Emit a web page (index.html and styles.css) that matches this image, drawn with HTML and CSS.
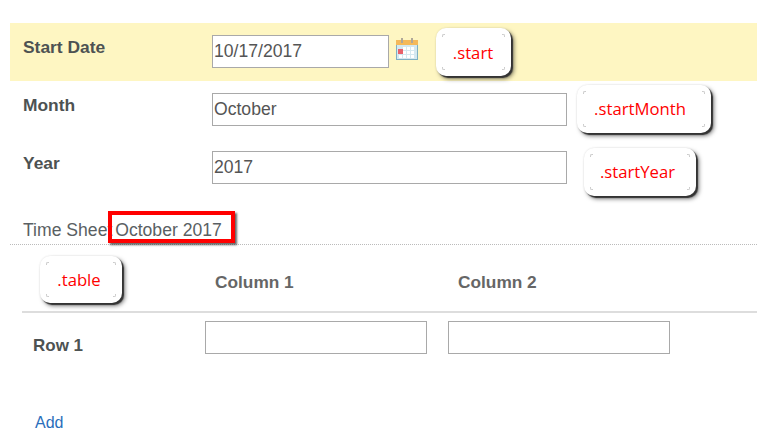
FILE: index.html
```html
<!DOCTYPE html>
<html lang="en">
<head>
<meta charset="utf-8">
<title>Time Sheet</title>
<link rel="stylesheet" href="styles.css">
</head>
<body>
<main class="page">
  <div class="row row-start">
    <label class="label">Start Date</label>
    <input class="input input-date" type="text" value="10/17/2017">
    <svg class="cal" width="22" height="22" viewBox="0 0 22 22" aria-hidden="true">
      <rect x="0.5" y="3.5" width="21" height="18" fill="#d5e8f0" stroke="#7fb0c2"/>
      <rect x="0" y="2" width="22" height="5" fill="#f5b95a"/>
      <rect x="5" y="0" width="2" height="5" fill="#b0a898"/>
      <rect x="15" y="0" width="2" height="5" fill="#b0a898"/>
      <g fill="#fff">
        <rect x="7" y="9" width="3" height="3"/><rect x="11" y="9" width="3" height="3"/><rect x="15" y="9" width="3" height="3"/>
        <rect x="7" y="13" width="3" height="3"/><rect x="11" y="13" width="3" height="3"/><rect x="15" y="13" width="3" height="3"/>
        <rect x="3" y="17" width="3" height="3"/><rect x="7" y="17" width="3" height="3"/><rect x="11" y="17" width="3" height="3"/><rect x="15" y="17" width="3" height="3"/>
      </g>
      <rect x="2" y="11" width="5" height="5" fill="#e8606a"/>
    </svg>
  </div>
  <div class="row">
    <label class="label">Month</label>
    <input class="input input-wide" type="text" value="October">
  </div>
  <div class="row">
    <label class="label">Year</label>
    <input class="input input-wide" type="text" value="2017">
  </div>
  <div class="sheet-title">Time Sheet <span class="sheet-period">October 2017</span></div>
  <div class="table-head">
    <div class="col-head">Column 1</div>
    <div class="col-head">Column 2</div>
  </div>
  <div class="table-row">
    <div class="row-name">Row 1</div>
    <input class="input input-cell" type="text">
    <input class="input input-cell" type="text">
  </div>
  <a class="add" href="#">Add</a>
</main>

<div class="callout c-start"><i class="tl"></i><i class="tr"></i><i class="bl"></i><i class="br"></i>.start</div>
<div class="callout c-month"><i class="tl"></i><i class="tr"></i><i class="bl"></i><i class="br"></i>.startMonth</div>
<div class="callout c-year"><i class="tl"></i><i class="tr"></i><i class="bl"></i><i class="br"></i>.startYear</div>
<div class="callout c-table"><i class="tl"></i><i class="tr"></i><i class="bl"></i><i class="br"></i>.table</div>
<div class="redbox"></div>
</body>
</html>
```
FILE: styles.css
```css
* { box-sizing: border-box; }
html, body { margin: 0; padding: 0; background: #fff; }
body { position: relative; width: 757px; height: 447px; overflow: hidden; font-family: "Liberation Sans", Arial, sans-serif; color: #555; }
.page { padding-top: 23px; padding-left: 10px; }
.row { display: flex; align-items: flex-start; height: 58px; padding-left: 13px; padding-top: 12px; }
.row-start { background: #fef6c2; }
.label { width: 189px; font-size: 17.4px; font-weight: 700; color: #4d5252; line-height: 24px; }
.input { display: block; height: 33px; border: 1px solid #a9a9a9; background: #fff; font: 17.6px "Liberation Sans", Arial, sans-serif; color: #555; padding: 0 1px; margin: 0; outline: 0; }
.input-date { width: 177px; }
.input-wide { width: 355px; }
.cal { margin-left: 7px; margin-top: 3px; }
.sheet-title { margin-left: 13px; margin-top: 1px; height: 46px; padding-top: 22px; font-size: 17.6px; line-height: 21px; color: #5a5f63; white-space: nowrap; }
.sheet-period { margin-left: -2px; }
.table-head { display: flex; height: 69px; border-top: 1px dotted #bbb; padding-left: 205px; padding-top: 25px; position: relative; }
.table-head::after { content: ""; position: absolute; left: 12px; right: 0; bottom: 0; border-bottom: 2px solid #ddd; }
.col-head { width: 243px; font-size: 17.3px; font-weight: 700; color: #666; line-height: 24px; }
.table-row { display: flex; align-items: flex-start; margin-left: 12px; padding-top: 8px; }
.row-name { width: 183px; padding-left: 11px; padding-top: 15px; font-size: 17px; font-weight: 700; color: #4d5252; line-height: 20px; }
.input-cell { width: 222px; margin-right: 21px; }
.add { display: block; margin-left: 25px; margin-top: 57px; font-size: 16px; line-height: 20px; color: #2a6ebb; text-decoration: none; }
.callout { position: absolute; background: #fff; border-radius: 10px; box-shadow: 2px 2px 1px #333, 3px 3px 4px rgba(0,0,0,.5), 0 0 2px rgba(0,0,0,.12); color: #f00; font: 16.7px/48px "Open Sans", sans-serif; text-align: center; }
.callout i { position: absolute; width: 3px; height: 3px; border: 0 solid #ccc; }
.callout .tl { left: 6px; top: 6px; border-width: 1px 0 0 1px; border-top-left-radius: 2px; }
.callout .tr { right: 6px; top: 6px; border-width: 1px 1px 0 0; border-top-right-radius: 2px; }
.callout .bl { left: 6px; bottom: 6px; border-width: 0 0 1px 1px; border-bottom-left-radius: 2px; }
.callout .br { right: 6px; bottom: 6px; border-width: 0 1px 1px 0; border-bottom-right-radius: 2px; }
.c-start { left: 436px; top: 28px; width: 75px; height: 48px; padding-right: 1px; line-height: 50px; }
.c-month { left: 577px; top: 85px; width: 134px; height: 48px; padding-right: 8px; }
.c-year { left: 584px; top: 148px; width: 112px; height: 48px; padding-right: 5px; }
.c-table { left: 40px; top: 256px; width: 82px; height: 47px; padding-right: 4px; }
.redbox { position: absolute; left: 108px; top: 211px; width: 127px; height: 32px; border: 4px solid #f00; box-shadow: 2px 2px 2px rgba(0,0,0,.6); }
```
